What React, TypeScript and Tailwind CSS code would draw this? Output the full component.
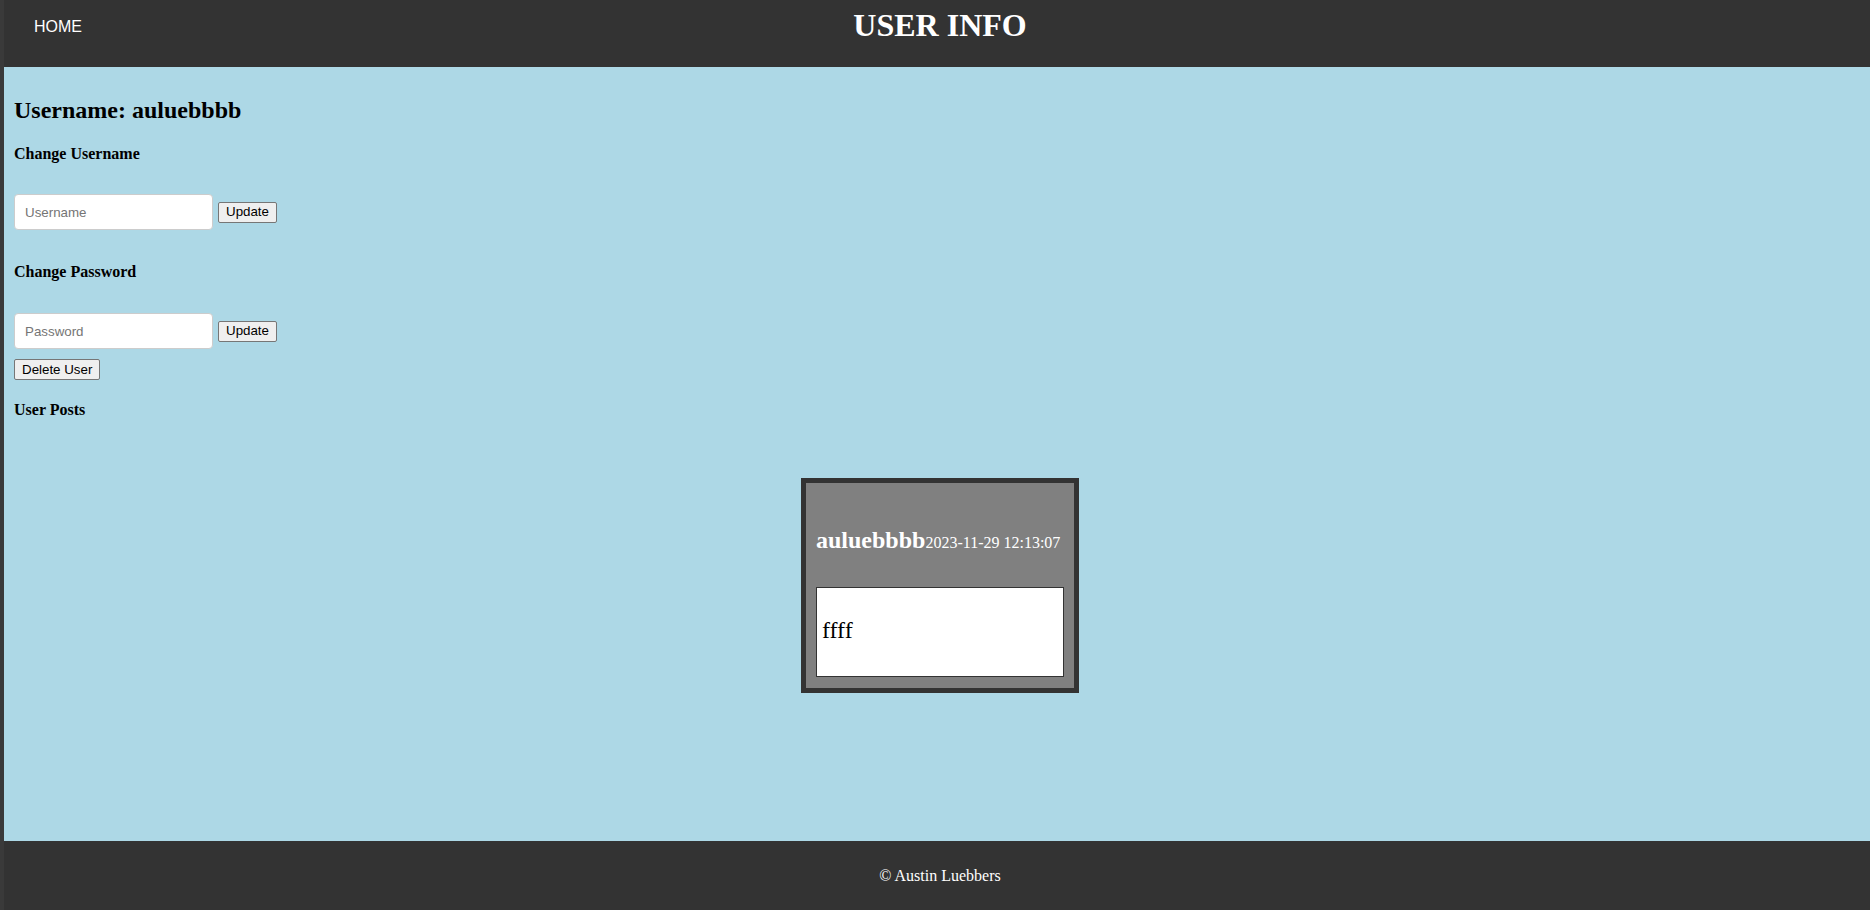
import React, { useState } from 'react';

const serif = "font-['Liberation_Serif','Times_New_Roman',serif]";
const sans = "font-['Liberation_Sans',Arial,sans-serif]";

const btn =
  "bg-[#efefef] border border-[#767676] rounded-[2px] px-[7px] h-[21px] text-[13.33px] leading-none text-black " +
  sans;

const inputCls =
  "w-[199px] h-[36px] bg-white border border-[#cccccc] rounded-[4px] px-[10px] text-[13.33px] text-black placeholder:text-[#757575] outline-none " +
  sans;

const App: React.FC = () => {
  const [username, setUsername] = useState('');
  const [password, setPassword] = useState('');

  return (
    <div className={`flex h-screen w-full ${serif}`}>
      {/* window edge */}
      <div className="w-[4px] shrink-0 bg-[#3a3a3a]" />

      <div className="flex flex-1 flex-col">
        {/* Header */}
        <header className="grid h-[67px] shrink-0 grid-cols-[1fr_auto_1fr] bg-[#333333]">
          <div className="pl-[30px] pt-[15px]">
            <a href="#" className={`text-[16px] leading-[18px] text-white ${sans}`}>
              HOME
            </a>
          </div>
          <h1 className="ml-[6px] pt-[7px] text-[32px] font-bold leading-[36px] text-white">
            USER INFO
          </h1>
          <div />
        </header>

        {/* Main */}
        <main className="flex-1 bg-[#add8e6] pl-[10px] pt-[30px] text-black">
          <h2 className="text-[24px] font-bold leading-[27px]">Username: auluebbbb</h2>

          <h4 className="mt-[21px] text-[16px] font-bold leading-[18px]">Change Username</h4>
          <div className="mt-[31px] flex items-center gap-[5px]">
            <input
              className={inputCls}
              placeholder="Username"
              value={username}
              onChange={(e) => setUsername(e.target.value)}
            />
            <button className={btn}>Update</button>
          </div>

          <h4 className="mt-[33px] text-[16px] font-bold leading-[18px]">Change Password</h4>
          <div className="mt-[32px] flex items-center gap-[5px]">
            <input
              type="password"
              className={inputCls}
              placeholder="Password"
              value={password}
              onChange={(e) => setPassword(e.target.value)}
            />
            <button className={btn}>Update</button>
          </div>

          <button className={`mt-[10px] block ${btn}`}>Delete User</button>

          <h4 className="mt-[21px] text-[16px] font-bold leading-[18px]">User Posts</h4>

          {/* Posts */}
          <div className="mt-[59px] flex justify-center pr-[4px]">
            <div className="w-fit border-[5px] border-[#333333] bg-[#808080] px-[10px] pt-[10px] pb-[11px]">
              <div className="mt-[34px] flex items-baseline text-white">
                <span className="text-[24px] font-bold leading-[27px]">auluebbbb</span>
                <span className="text-[16px] leading-[27px]">2023-11-29 12:13:07</span>
              </div>
              <div className="mt-[31px] flex h-[90px] w-[248px] items-center border border-[#333333] bg-white px-[5px] pb-[3px]">
                <p className="text-[24px] leading-[27px] text-black">ffff</p>
              </div>
            </div>
          </div>
        </main>

        {/* Footer */}
        <footer className="flex h-[69px] shrink-0 items-center justify-center bg-[#333333] pl-[6px]">
          <p className="text-[16px] leading-[18px] text-white">© Austin Luebbers</p>
        </footer>
      </div>
    </div>
  );
};

export default App;
